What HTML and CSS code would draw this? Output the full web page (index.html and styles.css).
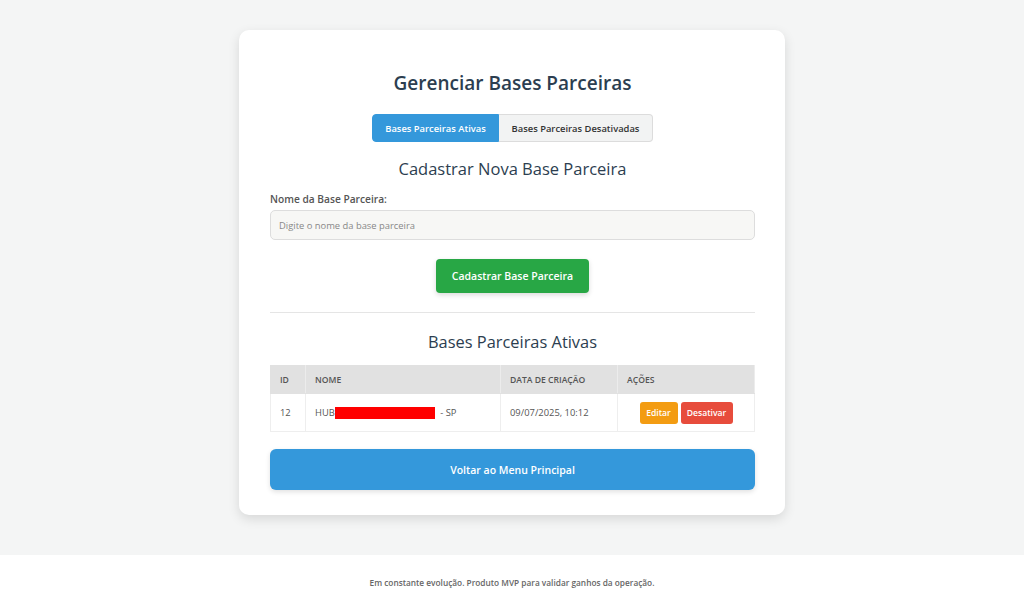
FILE: index.html
```html
<!DOCTYPE html>
<html lang="pt-BR">
<head>
<meta charset="utf-8">
<title>Gerenciar Bases Parceiras</title>
<link rel="stylesheet" href="styles.css">
</head>
<body>
<main class="page">
  <section class="card">
    <h1 class="title">Gerenciar Bases Parceiras</h1>
    <div class="tabs">
      <button class="tab tab-active">Bases Parceiras Ativas</button>
      <button class="tab">Bases Parceiras Desativadas</button>
    </div>
    <h2 class="subtitle">Cadastrar Nova Base Parceira</h2>
    <label class="label" for="nome">Nome da Base Parceira:</label>
    <input class="input" id="nome" type="text" placeholder="Digite o nome da base parceira">
    <div class="center">
      <button class="btn-green">Cadastrar Base Parceira</button>
    </div>
    <hr class="divider">
    <h3 class="section-title">Bases Parceiras Ativas</h3>
    <table class="table">
      <thead>
        <tr>
          <th class="col-id">ID</th>
          <th class="col-nome">Nome</th>
          <th class="col-data">Data de Criação</th>
          <th class="col-acoes">Ações</th>
        </tr>
      </thead>
      <tbody>
        <tr>
          <td>12</td>
          <td>HUB<span class="redact"></span> - SP</td>
          <td>09/07/2025, 10:12</td>
          <td class="actions"><button class="btn-sm btn-edit">Editar</button><button class="btn-sm btn-off">Desativar</button></td>
        </tr>
      </tbody>
    </table>
    <button class="btn-back">Voltar ao Menu Principal</button>
  </section>
</main>
<footer class="footer">Em constante evolução. Produto MVP para validar ganhos da operação.</footer>
</body>
</html>
```

FILE: styles.css
```css
* { box-sizing: border-box; }
html, body { margin: 0; padding: 0; }
body {
  background: #f4f5f5;
  font-family: "Open Sans", "Noto Sans", sans-serif;
  color: #555;
}
.page {
  height: 555px;
  padding-top: 30px;
  display: flex;
  justify-content: center;
  align-items: flex-start;
}
.card {
  width: 546px;
  background: #fff;
  border-radius: 10px;
  box-shadow: 0 4px 12px rgba(0,0,0,0.12);
  padding: 38px 30px 25px 31px;
  display: flex;
  flex-direction: column;
}
.title {
  margin: 0;
  text-align: center;
  font-size: 19px;
  font-weight: 600;
  color: #2c3e50;
  line-height: 30px;
}
.tabs {
  display: flex;
  justify-content: center;
  margin-top: 16px;
}
.tab {
  font-family: inherit;
  font-size: 9.4px;
  font-weight: 600;
  height: 28px;
  padding: 0 12px;
  border: 1px solid #dcdcdc;
  background: #f2f3f3;
  color: #333;
  margin: 0;
}
.tab-active {
  background: #3498db;
  border-color: #3498db;
  color: #fff;
  border-radius: 4px 0 0 4px;
  width: 127px;
}
.tab:last-child {
  border-left: none;
  border-radius: 0 4px 4px 0;
  width: 154px;
}
.subtitle {
  margin: 14px 0 0;
  text-align: center;
  font-size: 16.5px;
  font-weight: 500;
  color: #2c3e50;
  line-height: 26px;
}
.label {
  margin-top: 10px;
  font-size: 10.2px;
  font-weight: 600;
  color: #555;
  line-height: 14px;
}
.input {
  margin-top: 4px;
  height: 30px;
  width: 100%;
  border: 1px solid #dddddd;
  border-radius: 5px;
  background: #f7f7f5;
  padding: 0 8px;
  font-family: inherit;
  font-size: 9.4px;
}
.input::placeholder { color: #888; }
.center {
  display: flex;
  justify-content: center;
  margin-top: 19px;
}
.btn-green {
  width: 153px;
  height: 34px;
  border: none;
  border-radius: 4px;
  background: #28a745;
  color: #fff;
  font-family: inherit;
  font-size: 10.5px;
  font-weight: 600;
  box-shadow: 0 2px 5px rgba(0,0,0,0.15);
}
.divider {
  margin: 19px 0 0;
  border: none;
  border-top: 1px solid #e5e5e5;
  height: 0;
}
.section-title {
  margin: 16px 0 0;
  text-align: center;
  font-size: 16.4px;
  font-weight: 500;
  color: #2c3e50;
  line-height: 26px;
}
.table {
  margin-top: 10px;
  width: 100%;
  border-collapse: collapse;
  font-size: 9.4px;
}
.table th {
  background: #e1e1e1;
  text-transform: uppercase;
  text-align: left;
  font-weight: 600;
  font-size: 8.6px;
  color: #555;
  height: 28px;
  padding: 0 9px;
  border: 1px solid #e1e1e1;
  border-right-color: #ececec;
}
.table td {
  height: 38px;
  padding: 0 9px;
  border: 1px solid #eeeeee;
  color: #555;
}
.col-id { width: 35px; }
.col-nome { width: 195px; }
.col-data { width: 117px; }
.actions { text-align: center; }
.redact {
  display: inline-block;
  width: 100px;
  height: 12px;
  background: #ff0000;
  vertical-align: middle;
  margin-right: 3px;
}
.btn-sm {
  height: 22px;
  border: none;
  border-radius: 3px;
  color: #fff;
  font-family: inherit;
  font-size: 8.6px;
  font-weight: 600;
  padding: 0;
  vertical-align: middle;
}
.btn-edit { background: #f39c12; width: 38px; margin-right: 3px; }
.btn-off { background: #e74c3c; width: 52px; }
.btn-back {
  margin-top: 17px;
  width: 100%;
  height: 41px;
  border: none;
  border-radius: 6px;
  background: #3498db;
  color: #fff;
  font-family: inherit;
  font-size: 10.5px;
  font-weight: 600;
  box-shadow: 0 2px 5px rgba(0,0,0,0.12);
}
.footer {
  height: 55px;
  background: #fff;
  display: flex;
  align-items: center;
  justify-content: center;
  font-size: 8.3px;
  font-weight: 600;
  color: #666;
  padding-bottom: 1px;
}
```
